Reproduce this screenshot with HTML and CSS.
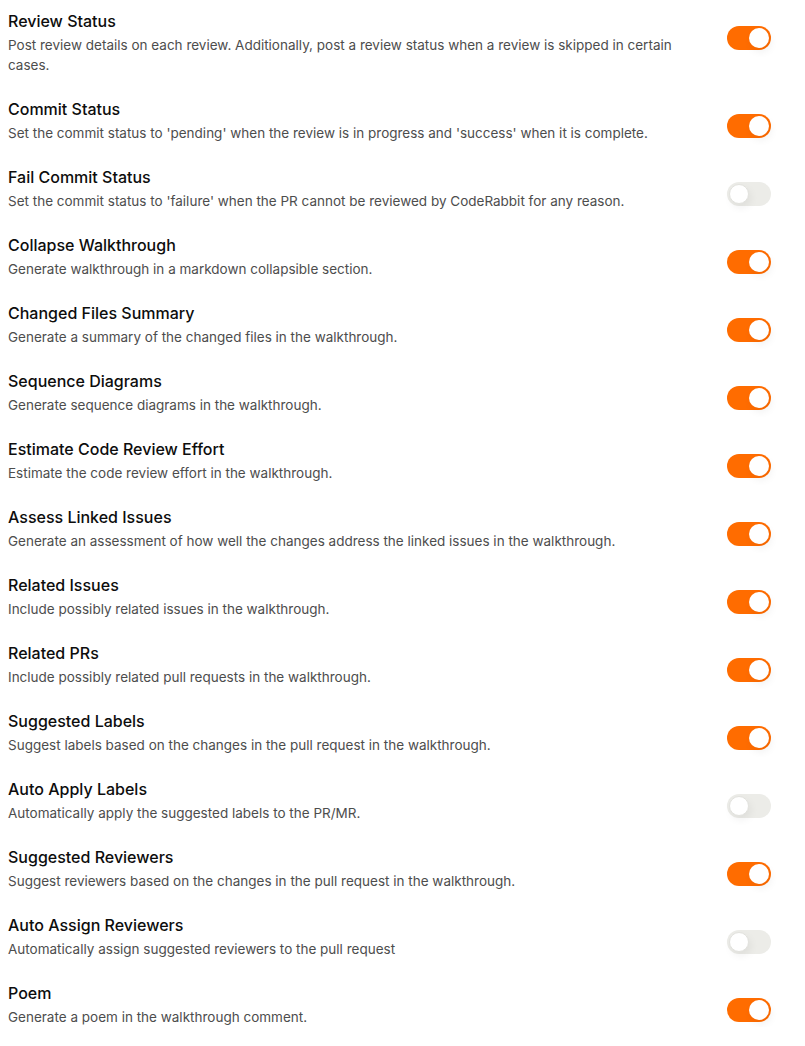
FILE: index.html
```html
<!DOCTYPE html>
<html>
<head>
<meta charset="utf-8">
<link rel="stylesheet" href="styles.css">
</head>
<body>
<div class="list">
  <div class="row">
    <div class="text"><div class="title">Review Status</div><div class="desc">Post review details on each review. Additionally, post a review status when a review is skipped in certain cases.</div></div>
    <span class="toggle on"><span class="knob"></span></span>
  </div>
  <div class="row">
    <div class="text"><div class="title">Commit Status</div><div class="desc">Set the commit status to 'pending' when the review is in progress and 'success' when it is complete.</div></div>
    <span class="toggle on"><span class="knob"></span></span>
  </div>
  <div class="row">
    <div class="text"><div class="title">Fail Commit Status</div><div class="desc">Set the commit status to 'failure' when the PR cannot be reviewed by CodeRabbit for any reason.</div></div>
    <span class="toggle"><span class="knob"></span></span>
  </div>
  <div class="row">
    <div class="text"><div class="title">Collapse Walkthrough</div><div class="desc">Generate walkthrough in a markdown collapsible section.</div></div>
    <span class="toggle on"><span class="knob"></span></span>
  </div>
  <div class="row">
    <div class="text"><div class="title">Changed Files Summary</div><div class="desc">Generate a summary of the changed files in the walkthrough.</div></div>
    <span class="toggle on"><span class="knob"></span></span>
  </div>
  <div class="row">
    <div class="text"><div class="title">Sequence Diagrams</div><div class="desc">Generate sequence diagrams in the walkthrough.</div></div>
    <span class="toggle on"><span class="knob"></span></span>
  </div>
  <div class="row">
    <div class="text"><div class="title">Estimate Code Review Effort</div><div class="desc">Estimate the code review effort in the walkthrough.</div></div>
    <span class="toggle on"><span class="knob"></span></span>
  </div>
  <div class="row">
    <div class="text"><div class="title">Assess Linked Issues</div><div class="desc">Generate an assessment of how well the changes address the linked issues in the walkthrough.</div></div>
    <span class="toggle on"><span class="knob"></span></span>
  </div>
  <div class="row">
    <div class="text"><div class="title">Related Issues</div><div class="desc">Include possibly related issues in the walkthrough.</div></div>
    <span class="toggle on"><span class="knob"></span></span>
  </div>
  <div class="row">
    <div class="text"><div class="title">Related PRs</div><div class="desc">Include possibly related pull requests in the walkthrough.</div></div>
    <span class="toggle on"><span class="knob"></span></span>
  </div>
  <div class="row">
    <div class="text"><div class="title">Suggested Labels</div><div class="desc">Suggest labels based on the changes in the pull request in the walkthrough.</div></div>
    <span class="toggle on"><span class="knob"></span></span>
  </div>
  <div class="row">
    <div class="text"><div class="title">Auto Apply Labels</div><div class="desc">Automatically apply the suggested labels to the PR/MR.</div></div>
    <span class="toggle"><span class="knob"></span></span>
  </div>
  <div class="row">
    <div class="text"><div class="title">Suggested Reviewers</div><div class="desc">Suggest reviewers based on the changes in the pull request in the walkthrough.</div></div>
    <span class="toggle on"><span class="knob"></span></span>
  </div>
  <div class="row">
    <div class="text"><div class="title">Auto Assign Reviewers</div><div class="desc">Automatically assign suggested reviewers to the pull request</div></div>
    <span class="toggle"><span class="knob"></span></span>
  </div>
  <div class="row">
    <div class="text"><div class="title">Poem</div><div class="desc">Generate a poem in the walkthrough comment.</div></div>
    <span class="toggle on"><span class="knob"></span></span>
  </div>
</div>
</body>
</html>
```
FILE: styles.css
```css
html, body {
  margin: 0;
  padding: 0;
  background: #ffffff;
}
body {
  font-family: Inter, "Noto Sans", sans-serif;
  color: #111111;
}
.list {
  display: flex;
  flex-direction: column;
  gap: 22px;
  padding: 9px 34px 0 8px;
}
.row {
  display: flex;
  align-items: flex-start;
  justify-content: space-between;
  gap: 40px;
}
.text {
  flex: 1;
  max-width: 685px;
}
.title {
  font-size: 16px;
  line-height: 24px;
  font-weight: 500;
  color: #0d0d0d;
}
.desc {
  margin-top: 2px;
  font-size: 13.5px;
  line-height: 20px;
  color: #4d4d4d;
}
.toggle {
  flex: none;
  margin-top: 17px;
  width: 44px;
  height: 24px;
  border-radius: 12px;
  background: #ecece8;
  padding: 2px;
  box-sizing: border-box;
  display: flex;
  justify-content: flex-start;
}
.toggle.on {
  background: #ff6c00;
  justify-content: flex-end;
}
.knob {
  width: 20px;
  height: 20px;
  border-radius: 50%;
  background: #ffffff;
  box-sizing: border-box;
  box-shadow: 2px 4px 8px rgba(0, 0, 0, 0.06);
}
.toggle:not(.on) .knob {
  border: 1px solid #e2e2de;
}
```
